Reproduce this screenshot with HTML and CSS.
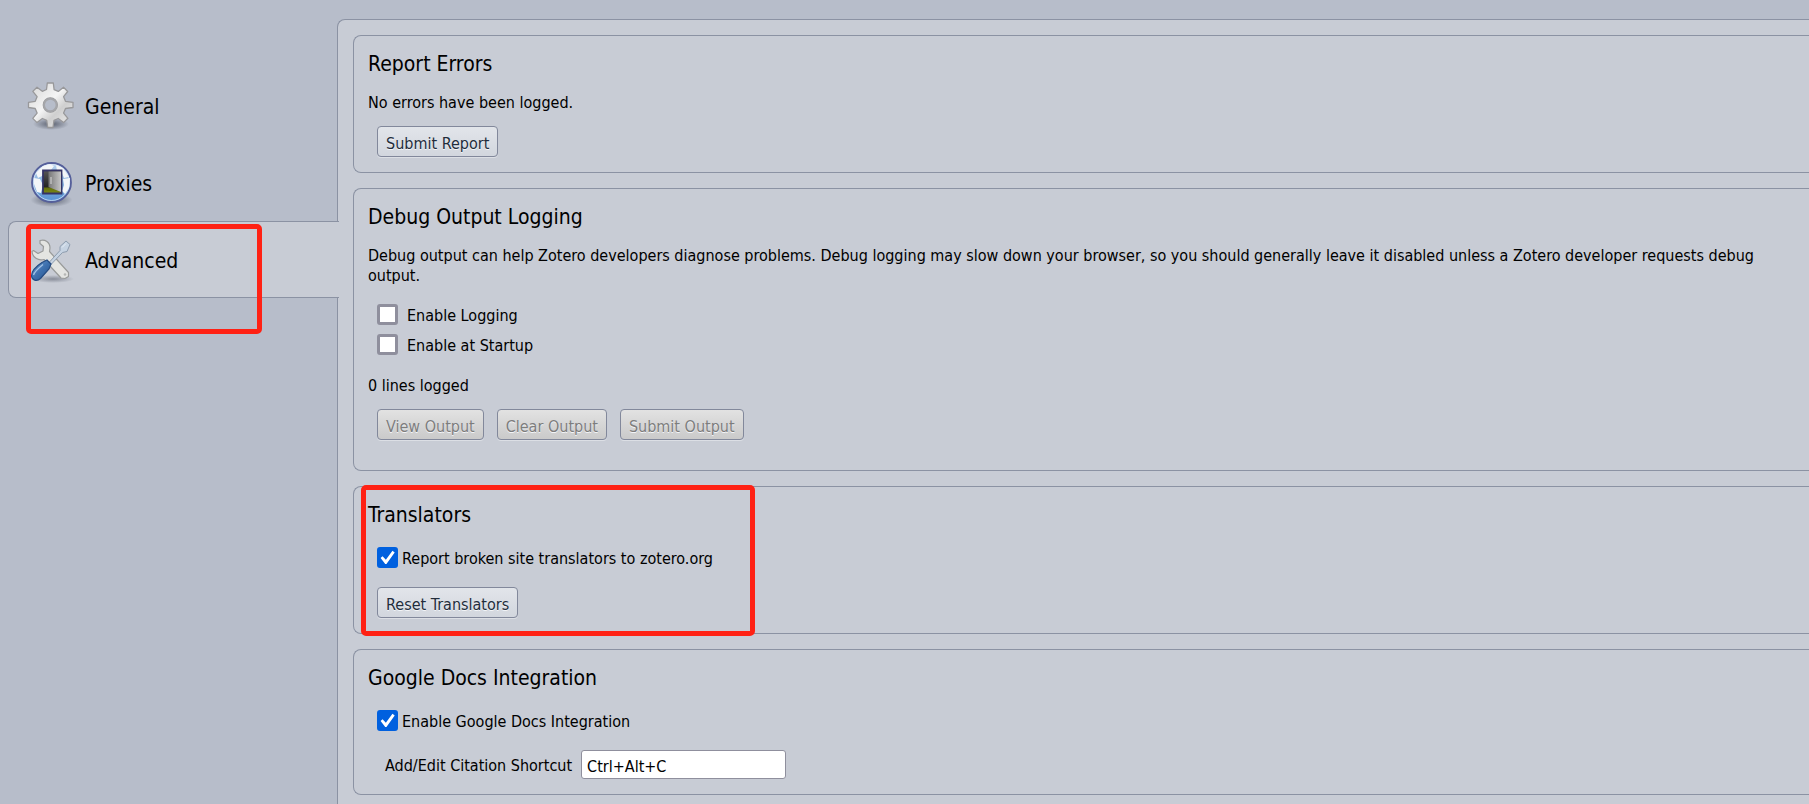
FILE: index.html
```html
<!DOCTYPE html>
<html lang="en">
<head>
<meta charset="utf-8">
<title>Zotero Connector Preferences</title>
<link rel="stylesheet" href="styles.css">
</head>
<body>
<div class="page">
  <nav class="tabs" aria-label="Preferences sections">
    <a class="tab" href="#general">
      <svg class="tab-icon" viewBox="0 0 48 48" aria-hidden="true">
        <defs>
          <linearGradient id="metal" x1="0" y1="0" x2="1" y2="1">
            <stop offset="0" stop-color="#d4d4d4"/><stop offset=".45" stop-color="#f5f5f5"/><stop offset=".65" stop-color="#cfcfcf"/><stop offset="1" stop-color="#f0f0f0"/>
          </linearGradient>
          <radialGradient id="shade"><stop offset="0" stop-color="#3a4050" stop-opacity=".75"/><stop offset="1" stop-color="#3a4050" stop-opacity="0"/></radialGradient>
        </defs>
        <ellipse cx="25" cy="42" rx="18" ry="6" fill="url(#shade)"/>
        <path fill="url(#metal)" stroke="#98989a" stroke-width="1.3" stroke-linejoin="round" fill-rule="evenodd" d="M21.300 1h6l.8 6.600 4.200 1.800 5.200-4.100 4.200 4.200-4.100 5.200 1.900 4.600 7.500 1v5.200l-7.500 1-1.900 4.600 4.300 5.200-4.300 4.300-5.400-4.100-4.200 1.800-1 7.200h-5.300l-1-7.200-4.300-1.800-5.400 4.100-4.200-4.200 4.300-5.300-1.900-4.600-6.700-1v-5.200l6.700-1 1.900-4.600-4.300-5.300 4.200-4.200 5.300 4.100 4.200-1.800zM24.300 16a7 7 0 1 0 0 14 7 7 0 0 0 0-14z"/>
        <circle cx="24.300" cy="23" r="6.300" fill="none" stroke="#a5a6aa" stroke-width="2"/>
      </svg>
      <span>General</span>
    </a>
    <a class="tab" href="#proxies">
      <svg class="tab-icon" viewBox="0 0 48 48" aria-hidden="true">
        <defs>
          <linearGradient id="globe" x1="0" y1="0" x2="0" y2="1"><stop offset="0" stop-color="#b9d4ee"/><stop offset="1" stop-color="#5591d2"/></linearGradient>
          <linearGradient id="door" x1="0" y1="0" x2="1" y2="0"><stop offset="0" stop-color="#777"/><stop offset="1" stop-color="#c5c5c5"/></linearGradient>
          <linearGradient id="room" x1="0" y1="0" x2="0" y2="1"><stop offset="0" stop-color="#555"/><stop offset=".7" stop-color="#252525"/><stop offset=".78" stop-color="#66720d"/><stop offset="1" stop-color="#7c8a12"/></linearGradient>
        </defs>
        <ellipse cx="25.500" cy="41" rx="21" ry="7" fill="url(#shade)"/>
        <circle cx="25.500" cy="23.500" r="19.500" fill="url(#globe)" stroke="#555f9a" stroke-width="1.800"/>
        <path fill="#f3f6f8" d="M10 14l7-7 7-2 4 2-3 4-6 1-3 5-4 2zM30 6l7 3 6 9-5 1-2-5-5-2zM8 19l6 1 3 6-2 8-4-1-3-8zM37 20l7-1-1 10-4 6-3-3 2-6z"/>
        <circle cx="25.500" cy="23.500" r="18" fill="none" stroke="#eef3fa" stroke-opacity=".65"/>
        <path fill="url(#room)" stroke="#343365" stroke-width="1.800" d="M17 11.500h18.500v23H17z"/>
        <path fill="url(#door)" d="M22.500 12.500H35V33l-12.500-5z"/>
        <path fill="none" stroke="#d9d9d9" d="M25 18v7"/>
      </svg>
      <span>Proxies</span>
    </a>
    <a class="tab tab-active" href="#advanced" aria-current="page">
      <svg class="tab-icon" viewBox="0 0 48 48" aria-hidden="true">
        <defs>
          <linearGradient id="handle" x1="0" y1="0" x2="1" y2="1"><stop offset="0" stop-color="#77a3d5"/><stop offset=".5" stop-color="#3d70ae"/><stop offset="1" stop-color="#24518b"/></linearGradient>
        </defs>
        <ellipse cx="27" cy="43" rx="21" ry="4" fill="url(#shade)" opacity=".6"/>
        <path fill="#e4e5e2" stroke="#999b9a" stroke-width="1.200" stroke-linejoin="round" d="M14 4.500c5-1.500 10 1.500 10 7.500l-.5 3.500L42.500 36.500v4l-3.500 2-4-.5L18 23.500c-6 1.500-11.500-2-12-8l1.500-1 4.500 3 5-2.500.5-4.500-3.500-3z"/>
        <circle cx="39" cy="38.500" r="1.300" fill="#b5b6b4"/>
        <path fill="#c6d3e2" stroke="#8d9cae" stroke-linejoin="round" d="M23 26.500l11-12V10.500L40 5l4 3.500-3 7-4.500 1L25 28.500z"/>
        <path fill="none" stroke="#e8eef5" d="M36 11.500l4-4"/>
        <path fill="url(#handle)" stroke="#244b82" stroke-width="1.200" d="M16 26.500l5-2.500 4 4-2 5-8.500 9.500c-4 3.500-8.500 1.500-9-2.500 0-6 5-10 10.500-13.500z"/>
        <path fill="none" stroke="#a3c2e5" stroke-width="1.300" d="M17 28.500C12 32.500 8.500 35.500 7.500 39"/>
      </svg>
      <span>Advanced</span>
      <i class="mark mark-tab"></i>
    </a>
  </nav>

  <main class="panel">
    <section class="group">
      <h2>Report Errors</h2>
      <p>No errors have been logged.</p>
      <div class="buttons"><button type="button">Submit Report</button></div>
    </section>

    <section class="group group-debug">
      <h2>Debug Output Logging</h2>
      <p>Debug output can help Zotero developers diagnose problems. Debug logging may slow down your browser, so you should generally leave it disabled unless a Zotero developer requests debug output.</p>
      <div class="checks">
        <div class="check check-wide"><input type="checkbox" id="log"><label for="log">Enable Logging</label></div>
        <div class="check check-wide"><input type="checkbox" id="startup"><label for="startup">Enable at Startup</label></div>
      </div>
      <p class="count">0 lines logged</p>
      <div class="buttons">
        <button type="button" disabled>View Output</button>
        <button type="button" disabled>Clear Output</button>
        <button type="button" disabled>Submit Output</button>
      </div>
    </section>

    <section class="group">
      <h2>Translators</h2>
      <div class="checks">
        <div class="check"><input type="checkbox" id="broken" checked><label for="broken">Report broken site translators to zotero.org</label></div>
      </div>
      <div class="buttons buttons-spaced"><button type="button">Reset Translators</button></div>
      <i class="mark mark-group"></i>
    </section>

    <section class="group">
      <h2>Google Docs Integration</h2>
      <div class="checks">
        <div class="check"><input type="checkbox" id="docs" checked><label for="docs">Enable Google Docs Integration</label></div>
      </div>
      <div class="field">
        <label for="shortcut">Add/Edit Citation Shortcut</label>
        <input type="text" id="shortcut" value="Ctrl+Alt+C">
      </div>
    </section>
  </main>
</div>
</body>
</html>
```
FILE: styles.css
```css
* {
  box-sizing: border-box;
}

body {
  margin: 0;
  background: #b7bdca;
  color: #000;
  font: 16px/20px Tahoma, "DejaVu Sans Condensed", "Noto Sans", sans-serif;
  overflow: hidden;
}

.page {
  display: flex;
  min-height: 100vh;
  padding-top: 19px;
}

.tabs {
  flex: 0 0 337px;
  padding: 48px 0 0 8px;
}

.tab {
  position: relative;
  display: flex;
  align-items: center;
  gap: 11px;
  height: 77px;
  padding-left: 17px;
  border: 1px solid transparent;
  color: inherit;
  font-size: 21px;
  line-height: 26px;
  text-decoration: none;
}

.tab span {
  padding-top: 2px;
}

.tab-active {
  margin-right: -2px;
  background: #c8ccd5;
  border-color: #8b92a3;
  border-right: 0;
  border-radius: 8px 0 0 8px;
}

.tab-icon {
  width: 48px;
  height: 48px;
}

.panel {
  flex: 1;
  min-width: 0;
  display: flex;
  flex-direction: column;
  gap: 15px;
  padding: 15px 0 15px 15px;
  background: #c8ccd5;
  border: 1px solid #8b92a3;
  border-width: 1px 0 0 1px;
  border-radius: 8px 0 0 0;
}

.group {
  position: relative;
  padding: 15px 40px 15px 14px;
  border: 1px solid #8b92a3;
  border-right: 0;
  border-radius: 8px 0 0 8px;
}

.group-debug {
  padding-bottom: 30px;
}

h2 {
  margin: 0 0 15px;
  font-size: 21px;
  line-height: 27px;
  font-weight: 400;
}

p {
  margin: 0;
}

.count {
  margin-top: 21px;
}

.buttons {
  display: flex;
  gap: 13px;
  margin: 13px 0 0 9px;
}

.buttons-spaced {
  margin-top: 19px;
}

button {
  height: 31px;
  padding: 5px 8px 0;
  border: 1px solid #82889b;
  border-radius: 4px;
  background: linear-gradient(#e2e5ea, #d2d6de);
  box-shadow: 0 1px 0 #dcdfe5;
  color: #222c3b;
  font: inherit;
  text-shadow: 0 1px 0 #f3f5f8;
}

button:disabled {
  background: linear-gradient(#e2e2e2, #cacaca);
  color: #7d7d7d;
}

.checks {
  display: flex;
  flex-direction: column;
  gap: 9px;
  margin: 18px 0 0 9px;
}

.check {
  display: flex;
  align-items: center;
  gap: 4px;
}

.check-wide {
  gap: 9px;
}

.check label {
  padding-top: 2px;
  line-height: 19px;
}

.check input {
  appearance: none;
  display: grid;
  place-items: center;
  width: 21px;
  height: 21px;
  margin: 0;
  border: 3px solid #8f8f9d;
  border-radius: 3px;
  background: #fff;
}

.check input:checked {
  border-color: #0060df;
  background: #0060df;
}

.check input:checked::before {
  content: "";
  width: 15px;
  height: 15px;
  background: #fff;
  clip-path: polygon(4% 54%, 17% 42%, 39% 65%, 83% 5%, 98% 17%, 43% 93%, 35% 93%);
}

.field {
  display: flex;
  align-items: center;
  gap: 9px;
  margin: 19px 0 0 17px;
}

.field label {
  padding-top: 2px;
}

.field input {
  width: 205px;
  height: 29px;
  padding: 4px 5px 0;
  border: 1px solid #8f8f9d;
  border-radius: 3px;
  background: #fff;
  color: #000;
  font: inherit;
}

.mark {
  position: absolute;
  border: 5px solid #ff2114;
  border-radius: 5px;
  pointer-events: none;
}

.mark-tab {
  left: 17px;
  top: 2px;
  width: 236px;
  height: 110px;
}

.mark-group {
  left: 7px;
  top: -2px;
  bottom: -3px;
  width: 394px;
}
```
